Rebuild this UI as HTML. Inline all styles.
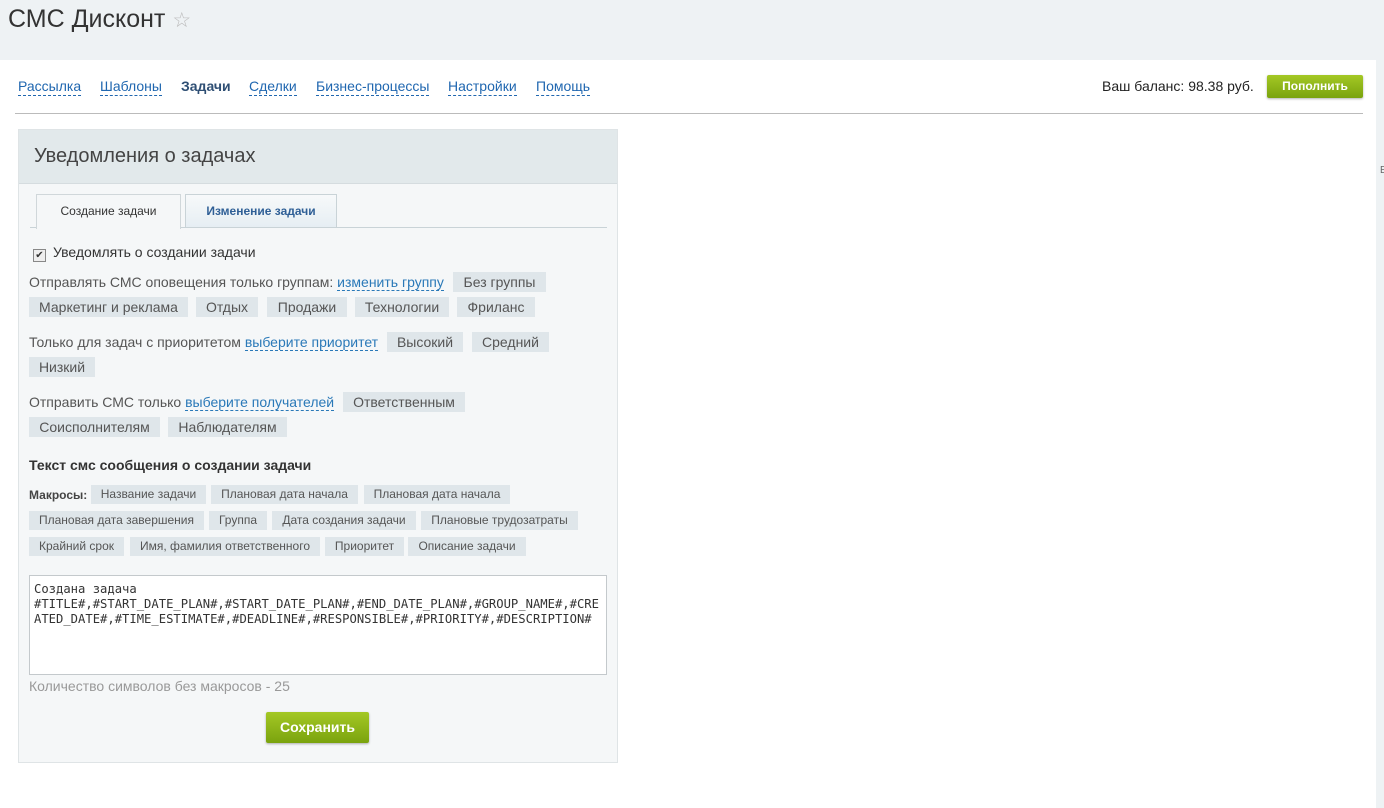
<!DOCTYPE html><html><head><meta charset="utf-8"><style>
body{margin:0;width:1384px;height:808px;background:#eef2f4;font-family:"Liberation Sans",Arial,sans-serif;position:relative;overflow:hidden;color:#333}
.a{position:absolute;white-space:nowrap}
.t{position:absolute;background:#dfe6ea;color:#555;font-size:14px;height:20px;line-height:20px;text-align:center}
.m{position:absolute;background:#dfe6ea;color:#555;font-size:12px;height:19px;line-height:19px;text-align:center}
.lk{color:#2a79b8;border-bottom:1px dashed #2a79b8}
.nav{position:absolute;top:78px;font-size:14px;color:#2067b0;border-bottom:1px dashed #2067b0;line-height:17px}
.btn{position:absolute;background:linear-gradient(#a4c825,#7aa30e);color:#fff;font-weight:bold;text-align:center;border-radius:2px;box-shadow:0 1px 2px rgba(0,0,0,.3)}
</style></head><body>
<div class="a" style="left:8px;top:5px;font-size:25px;color:#333">СМС Дисконт <span style="color:#bbb;font-size:21px">☆</span></div>
<div class="a" style="left:0;top:60px;width:1376px;height:748px;background:#fff"></div>
<div class="nav" style="left:18px">Рассылка</div>
<div class="nav" style="left:100px">Шаблоны</div>
<div class="a" style="left:181px;top:78px;font-size:14px;font-weight:bold;color:#2f4f74;line-height:17px">Задачи</div>
<div class="nav" style="left:249px">Сделки</div>
<div class="nav" style="left:316px">Бизнес-процессы</div>
<div class="nav" style="left:448px">Настройки</div>
<div class="nav" style="left:536px">Помощь</div>
<div class="a" style="left:1102px;top:78px;font-size:14px;color:#222">Ваш баланс: 98.38 руб.</div>
<div class="btn" style="left:1267px;top:75px;width:96px;height:23px;line-height:23px;font-size:12px">Пополнить</div>
<div class="a" style="left:15px;top:113px;width:1348px;height:1px;background:#bbb"></div>
<div class="a" style="left:1380px;top:165px;font-size:10px;color:#666">E</div>
<div class="a" style="left:18px;top:129px;width:598px;height:632px;background:#f5f7f8;border:1px solid #dfe4e6"></div>
<div class="a" style="left:19px;top:130px;width:598px;height:53px;background:#e2e9eb;border-bottom:1px solid #d5dcdf"></div>
<div class="a" style="left:34px;top:145px;font-size:20px;color:#444">Уведомления о задачах</div>
<div class="a" style="left:30px;top:227px;width:577px;height:1px;background:#c9d3d7"></div>
<div class="a" style="left:36px;top:194px;width:143px;height:34px;background:#f5f7f8;border:1px solid #d0d7da;border-bottom:none;font-size:12px;text-align:center;line-height:32px;color:#333">Создание задачи</div>
<div class="a" style="left:185px;top:194px;width:150px;height:32px;background:linear-gradient(#f7f9fa,#e6eef3);border:1px solid #c9d3d7;font-size:12px;font-weight:bold;text-align:center;line-height:32px;color:#2f5f96">Изменение задачи</div>
<div class="a" style="left:33px;top:244px;font-size:14px;color:#333"><span style="display:inline-block;width:11px;height:11px;border:1px solid #888;background:#eee;font-size:10px;line-height:11px;text-align:center;vertical-align:-1px;margin-right:7px">✔</span>Уведомлять о создании задачи</div>
<div class="a" style="left:29px;top:274px;font-size:14px;color:#555">Отправлять СМС оповещения только группам: <span class="lk">изменить группу</span></div>
<div class="t" style="left:453px;top:272px;width:93px">Без группы</div>
<div class="t" style="left:29px;top:297px;width:159px">Маркетинг и реклама</div>
<div class="t" style="left:196px;top:297px;width:62px">Отдых</div>
<div class="t" style="left:267px;top:297px;width:80px">Продажи</div>
<div class="t" style="left:355px;top:297px;width:94px">Технологии</div>
<div class="t" style="left:457px;top:297px;width:78px">Фриланс</div>
<div class="a" style="left:29px;top:334px;font-size:14px;color:#555">Только для задач с приоритетом <span class="lk">выберите приоритет</span></div>
<div class="t" style="left:387px;top:332px;width:76px">Высокий</div>
<div class="t" style="left:472px;top:332px;width:77px">Средний</div>
<div class="t" style="left:29px;top:357px;width:66px">Низкий</div>
<div class="a" style="left:29px;top:394px;font-size:14px;color:#555">Отправить СМС только <span class="lk">выберите получателей</span></div>
<div class="t" style="left:343px;top:392px;width:122px">Ответственным</div>
<div class="t" style="left:29px;top:417px;width:131px">Соисполнителям</div>
<div class="t" style="left:168px;top:417px;width:119px">Наблюдателям</div>
<div class="a" style="left:29px;top:457px;font-size:14px;font-weight:bold;color:#333">Текст смс сообщения о создании задачи</div>
<div class="a" style="left:29px;top:488px;font-size:12px;font-weight:bold;color:#444">Макросы:</div>
<div class="m" style="left:91px;top:485px;width:115px">Название задачи</div>
<div class="m" style="left:211px;top:485px;width:147px">Плановая дата начала</div>
<div class="m" style="left:364px;top:485px;width:146px">Плановая дата начала</div>
<div class="m" style="left:29px;top:511px;width:175px">Плановая дата завершения</div>
<div class="m" style="left:209px;top:511px;width:58px">Группа</div>
<div class="m" style="left:272px;top:511px;width:144px">Дата создания задачи</div>
<div class="m" style="left:421px;top:511px;width:157px">Плановые трудозатраты</div>
<div class="m" style="left:29px;top:537px;width:95px">Крайний срок</div>
<div class="m" style="left:130px;top:537px;width:190px">Имя, фамилия ответственного</div>
<div class="m" style="left:325px;top:537px;width:79px">Приоритет</div>
<div class="m" style="left:408px;top:537px;width:118px">Описание задачи</div>
<div class="a" style="left:29px;top:575px;width:576px;height:98px;background:#fff;border:1px solid #c4c9cc"></div>
<div class="a" style="left:34px;top:582px;font-family:'DejaVu Sans Mono',monospace;font-size:12.2px;line-height:15px;color:#333;white-space:pre">Создана задача
#TITLE#,#START_DATE_PLAN#,#START_DATE_PLAN#,#END_DATE_PLAN#,#GROUP_NAME#,#CRE
ATED_DATE#,#TIME_ESTIMATE#,#DEADLINE#,#RESPONSIBLE#,#PRIORITY#,#DESCRIPTION#</div>
<div class="a" style="left:29px;top:678px;font-size:14px;color:#999">Количество символов без макросов - 25</div>
<div class="btn" style="left:266px;top:712px;width:103px;height:31px;line-height:31px;font-size:14px">Сохранить</div>
</body></html>
